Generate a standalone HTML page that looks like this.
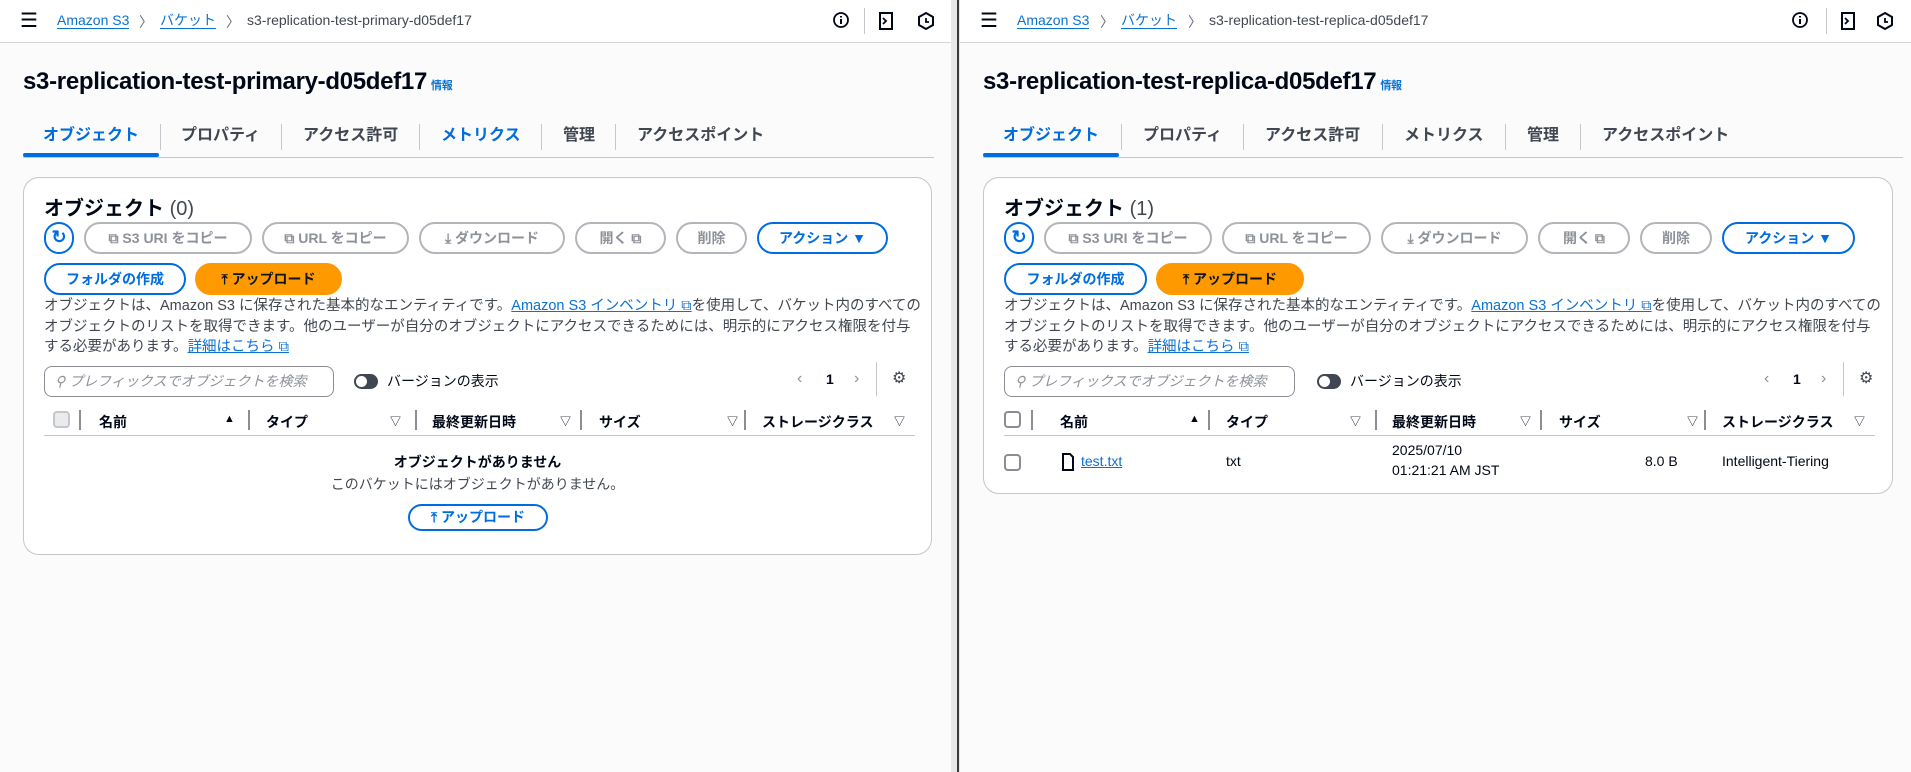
<!DOCTYPE html>
<html><head><meta charset="utf-8"><style>
*{box-sizing:border-box;margin:0;padding:0}
body{width:1911px;height:772px;overflow:hidden;background:#fafafa;font-family:"Liberation Sans","Noto Sans CJK JP",sans-serif;color:#000716;position:relative}
.pane{position:absolute;top:0;height:772px;background:#fbfbfb;overflow:hidden}
.pane *{position:absolute}
.pane span,.pane br{position:static!important}
.top{left:0;right:0;top:0;height:43px;background:#fff;border-bottom:1px solid #d5d5d8}
.bc{top:12px;font-size:14px;white-space:nowrap}
.lnk{color:#0972d3;border-bottom:1px solid #0972d3;line-height:17px}
.sep{color:#5f6b7a}
.t{white-space:nowrap}
.title{top:68px;left:23px;font-size:24px;font-weight:bold;letter-spacing:-0.3px}
.info{font-size:11px;font-weight:bold;color:#0972d3;margin-left:4px}
.tabs{left:23px;top:122px;height:36px;right:0}
.tab{top:0;font-size:16px;font-weight:bold;height:36px;line-height:28px;color:#414750}
.tsep{top:2px;width:1px;height:26px;background:#c6c6cd}
.box{left:23px;top:177px;background:#fff;border:1px solid #c6c6cd;border-radius:16px}
.btn{height:32px;border:2px solid #b4b4bb;border-radius:16px;color:#8d9199;font-size:14px;font-weight:bold;text-align:center;line-height:28px;white-space:nowrap}
.pb{border-color:#006ce0;color:#006ce0}
.up{background:#ff9900;border-color:#ff9900;color:#0f141a}
.desc{left:20px;top:118px;width:880px;font-size:14.5px;line-height:20.5px;color:#414750}
.lk{color:#0972d3;text-decoration:underline}
.hdr{font-size:14px;font-weight:bold;top:234px;white-space:nowrap}
.vd{top:232px;width:2px;height:20px;background:#8c8c94}
.tri{top:235px;font-size:11px}
</style></head><body>

<!-- LEFT PANE -->
<div class="pane" style="left:0;width:956px">
 <div class="top"></div>
 <div class="t" style="left:20px;top:8px;font-size:20px">☰</div>
 <div class="bc" style="left:57px"><span class="lnk">Amazon S3</span></div>
 <div class="bc sep" style="left:139px">〉</div>
 <div class="bc" style="left:160px"><span class="lnk">バケット</span></div>
 <div class="bc sep" style="left:226px">〉</div>
 <div class="bc" style="left:247px;color:#414750">s3-replication-test-primary-d05def17</div>
 <svg style="left:832px;top:11px" width="18" height="18" viewBox="0 0 18 18"><circle cx="9" cy="9" r="7" fill="none" stroke="#000716" stroke-width="1.8"/><path d="M9 8v5M9 5v1.5" stroke="#000716" stroke-width="2"/></svg>
 <div style="left:864px;top:8px;width:1px;height:26px;background:#c6c6cd"></div>
 <svg style="left:878px;top:11px" width="16" height="20" viewBox="0 0 16 20"><rect x="2" y="2" width="12" height="16" fill="none" stroke="#000716" stroke-width="2"/><path d="M5 7l3 3-3 3" fill="none" stroke="#000716" stroke-width="1.8"/></svg>
 <svg style="left:917px;top:11px" width="18" height="20" viewBox="0 0 18 20"><path d="M9 2l7 4v8l-7 4-7-4V6z" fill="none" stroke="#000716" stroke-width="2"/><path d="M9 7v4h3" fill="none" stroke="#000716" stroke-width="1.8"/></svg>

 <div class="title t">s3-replication-test-primary-d05def17<span class="info">情報</span></div>
 <div class="tabs">
  <div class="tab" style="left:20px;color:#006ce0">オブジェクト</div>
  <div style="left:0;top:31px;width:136px;height:4px;background:#006ce0;border-radius:2px"></div>
  <div class="tsep" style="left:137px"></div>
  <div class="tab" style="left:158px">プロパティ</div>
  <div class="tsep" style="left:258px"></div>
  <div class="tab" style="left:280px">アクセス許可</div>
  <div class="tsep" style="left:396px"></div>
  <div class="tab" style="left:418px;color:#006ce0">メトリクス</div>
  <div class="tsep" style="left:518px"></div>
  <div class="tab" style="left:540px">管理</div>
  <div class="tsep" style="left:592px"></div>
  <div class="tab" style="left:614px">アクセスポイント</div>
  <div style="left:0;top:35px;width:911px;height:1px;background:#c6c6cd"></div>
 </div>

 <div class="box" style="width:909px;height:378px">
  <div class="t" style="left:20px;top:14px;font-size:20px;font-weight:bold">オブジェクト <span style="font-weight:normal;color:#414750">(0)</span></div>
  <div class="btn pb" style="left:20px;top:44px;width:30px;font-size:18px;line-height:26px">↻</div>
  <div class="btn" style="left:60px;top:44px;width:168px">⧉ S3 URI をコピー</div>
  <div class="btn" style="left:238px;top:44px;width:147px">⧉ URL をコピー</div>
  <div class="btn" style="left:395px;top:44px;width:146px">⤓ ダウンロード</div>
  <div class="btn" style="left:551px;top:44px;width:91px">開く ⧉</div>
  <div class="btn" style="left:652px;top:44px;width:71px">削除</div>
  <div class="btn pb" style="left:733px;top:44px;width:131px">アクション ▼</div>
  <div class="btn pb" style="left:20px;top:85px;width:142px">フォルダの作成</div>
  <div class="btn up" style="left:171px;top:85px;width:147px">⤒ アップロード</div>
  <div class="desc">オブジェクトは、Amazon S3 に保存された基本的なエンティティです。<span class="lk">Amazon S3 インベントリ ⧉</span>を使用して、バケット内のすべてのオブジェクトのリストを取得できます。他のユーザーが自分のオブジェクトにアクセスできるためには、明示的にアクセス権限を付与する必要があります。<span class="lk">詳細はこちら ⧉</span></div>
  <div style="left:20px;top:188px;width:290px;height:31px;border:1px solid #8c8c94;border-radius:8px"></div>
  <div class="t" style="left:31px;top:193px;font-size:14px;color:#8d9199;font-style:italic">⚲ プレフィックスでオブジェクトを検索</div>
  <div style="left:330px;top:196px;width:24px;height:15px;border-radius:8px;background:#414750"></div>
  <div style="left:332px;top:198px;width:11px;height:11px;border-radius:6px;background:#fff"></div>
  <div class="t" style="left:363px;top:193px;font-size:14px">バージョンの表示</div>
  <div class="t" style="left:773px;top:192px;font-size:16px;color:#8d9199">‹</div>
  <div class="t" style="left:802px;top:193px;font-size:14px;font-weight:bold">1</div>
  <div class="t" style="left:830px;top:192px;font-size:16px;color:#8d9199">›</div>
  <div style="left:852px;top:184px;width:1px;height:34px;background:#c6c6cd"></div>
  <div class="t" style="left:868px;top:190px;font-size:16px;color:#414750">⚙</div>
  <div style="left:29px;top:233px;width:17px;height:17px;border:2px solid #c6c6cd;border-radius:4px;background:#e9ebed"></div>
  <div class="vd" style="left:55px"></div>
  <div class="hdr" style="left:75px">名前</div><div class="tri" style="left:200px">▲</div>
  <div class="vd" style="left:224px"></div>
  <div class="hdr" style="left:242px">タイプ</div><div class="tri" style="left:366px">▽</div>
  <div class="vd" style="left:391px"></div>
  <div class="hdr" style="left:408px">最終更新日時</div><div class="tri" style="left:536px">▽</div>
  <div class="vd" style="left:556px"></div>
  <div class="hdr" style="left:575px">サイズ</div><div class="tri" style="left:703px">▽</div>
  <div class="vd" style="left:720px"></div>
  <div class="hdr" style="left:738px">ストレージクラス</div><div class="tri" style="left:870px">▽</div>
  <div style="left:20px;top:257px;width:871px;height:1px;background:#c6c6cd"></div>
  <div class="t" style="left:0;width:907px;text-align:center;top:274px;font-size:14px;font-weight:bold">オブジェクトがありません</div>
  <div class="t" style="left:0;width:907px;text-align:center;top:296px;font-size:14px;color:#414750">このバケットにはオブジェクトがありません。</div>
  <div class="btn pb" style="left:384px;top:326px;width:140px;height:27px;line-height:23px">⤒ アップロード</div>
 </div>
</div>

<!-- divider -->
<div style="position:absolute;left:951px;top:0;width:9px;height:772px;background:#e8e8e8"></div>
<div style="position:absolute;left:957px;top:0;width:2px;height:772px;background:#3a3a3a"></div>

<!-- RIGHT PANE -->
<div class="pane" style="left:960px;width:951px">
 <div class="top"></div>
 <div class="t" style="left:20px;top:8px;font-size:20px">☰</div>
 <div class="bc" style="left:57px"><span class="lnk">Amazon S3</span></div>
 <div class="bc sep" style="left:140px">〉</div>
 <div class="bc" style="left:161px"><span class="lnk">バケット</span></div>
 <div class="bc sep" style="left:228px">〉</div>
 <div class="bc" style="left:249px;color:#414750">s3-replication-test-replica-d05def17</div>
 <svg style="left:831px;top:11px" width="18" height="18" viewBox="0 0 18 18"><circle cx="9" cy="9" r="7" fill="none" stroke="#000716" stroke-width="1.8"/><path d="M9 8v5M9 5v1.5" stroke="#000716" stroke-width="2"/></svg>
 <div style="left:866px;top:8px;width:1px;height:26px;background:#c6c6cd"></div>
 <svg style="left:880px;top:11px" width="16" height="20" viewBox="0 0 16 20"><rect x="2" y="2" width="12" height="16" fill="none" stroke="#000716" stroke-width="2"/><path d="M5 7l3 3-3 3" fill="none" stroke="#000716" stroke-width="1.8"/></svg>
 <svg style="left:916px;top:11px" width="18" height="20" viewBox="0 0 18 20"><path d="M9 2l7 4v8l-7 4-7-4V6z" fill="none" stroke="#000716" stroke-width="2"/><path d="M9 7v4h3" fill="none" stroke="#000716" stroke-width="1.8"/></svg>

 <div class="title t">s3-replication-test-replica-d05def17<span class="info">情報</span></div>
 <div class="tabs">
  <div class="tab" style="left:20px;color:#006ce0">オブジェクト</div>
  <div style="left:0;top:31px;width:136px;height:4px;background:#006ce0;border-radius:2px"></div>
  <div class="tsep" style="left:138px"></div>
  <div class="tab" style="left:160px">プロパティ</div>
  <div class="tsep" style="left:260px"></div>
  <div class="tab" style="left:282px">アクセス許可</div>
  <div class="tsep" style="left:399px"></div>
  <div class="tab" style="left:421px">メトリクス</div>
  <div class="tsep" style="left:522px"></div>
  <div class="tab" style="left:544px">管理</div>
  <div class="tsep" style="left:597px"></div>
  <div class="tab" style="left:619px">アクセスポイント</div>
  <div style="left:0;top:35px;width:920px;height:1px;background:#c6c6cd"></div>
 </div>

 <div class="box" style="width:910px;height:317px">
  <div class="t" style="left:20px;top:14px;font-size:20px;font-weight:bold">オブジェクト <span style="font-weight:normal;color:#414750">(1)</span></div>
  <div class="btn pb" style="left:20px;top:44px;width:30px;font-size:18px;line-height:26px">↻</div>
  <div class="btn" style="left:60px;top:44px;width:168px">⧉ S3 URI をコピー</div>
  <div class="btn" style="left:238px;top:44px;width:149px">⧉ URL をコピー</div>
  <div class="btn" style="left:397px;top:44px;width:147px">⤓ ダウンロード</div>
  <div class="btn" style="left:554px;top:44px;width:92px">開く ⧉</div>
  <div class="btn" style="left:656px;top:44px;width:72px">削除</div>
  <div class="btn pb" style="left:738px;top:44px;width:133px">アクション ▼</div>
  <div class="btn pb" style="left:20px;top:85px;width:143px">フォルダの作成</div>
  <div class="btn up" style="left:172px;top:85px;width:148px">⤒ アップロード</div>
  <div class="desc">オブジェクトは、Amazon S3 に保存された基本的なエンティティです。<span class="lk">Amazon S3 インベントリ ⧉</span>を使用して、バケット内のすべてのオブジェクトのリストを取得できます。他のユーザーが自分のオブジェクトにアクセスできるためには、明示的にアクセス権限を付与する必要があります。<span class="lk">詳細はこちら ⧉</span></div>
  <div style="left:20px;top:188px;width:291px;height:31px;border:1px solid #8c8c94;border-radius:8px"></div>
  <div class="t" style="left:31px;top:193px;font-size:14px;color:#8d9199;font-style:italic">⚲ プレフィックスでオブジェクトを検索</div>
  <div style="left:333px;top:196px;width:24px;height:15px;border-radius:8px;background:#414750"></div>
  <div style="left:335px;top:198px;width:11px;height:11px;border-radius:6px;background:#fff"></div>
  <div class="t" style="left:366px;top:193px;font-size:14px">バージョンの表示</div>
  <div class="t" style="left:780px;top:192px;font-size:16px;color:#8d9199">‹</div>
  <div class="t" style="left:809px;top:193px;font-size:14px;font-weight:bold">1</div>
  <div class="t" style="left:837px;top:192px;font-size:16px;color:#8d9199">›</div>
  <div style="left:859px;top:184px;width:1px;height:34px;background:#c6c6cd"></div>
  <div class="t" style="left:875px;top:190px;font-size:16px;color:#414750">⚙</div>
  <div style="left:20px;top:233px;width:17px;height:17px;border:2px solid #8c8c94;border-radius:4px;background:#fff"></div>
  <div class="vd" style="left:47px"></div>
  <div class="hdr" style="left:76px">名前</div><div class="tri" style="left:205px">▲</div>
  <div class="vd" style="left:224px"></div>
  <div class="hdr" style="left:242px">タイプ</div><div class="tri" style="left:366px">▽</div>
  <div class="vd" style="left:391px"></div>
  <div class="hdr" style="left:408px">最終更新日時</div><div class="tri" style="left:536px">▽</div>
  <div class="vd" style="left:556px"></div>
  <div class="hdr" style="left:575px">サイズ</div><div class="tri" style="left:703px">▽</div>
  <div class="vd" style="left:720px"></div>
  <div class="hdr" style="left:738px">ストレージクラス</div><div class="tri" style="left:870px">▽</div>
  <div style="left:20px;top:257px;width:871px;height:1px;background:#c6c6cd"></div>
  <div style="left:20px;top:276px;width:17px;height:17px;border:2px solid #8c8c94;border-radius:4px;background:#fff"></div>
  <svg style="left:78px;top:275px" width="12" height="18" viewBox="0 0 12 18"><path d="M1 1h7l3 3v13H1z" fill="none" stroke="#000716" stroke-width="2"/></svg>
  <div class="t" style="left:97px;top:275px;font-size:14px;color:#0972d3;text-decoration:underline">test.txt</div>
  <div class="t" style="left:242px;top:275px;font-size:14px">txt</div>
  <div class="t" style="left:408px;top:262px;font-size:14px;line-height:20px">2025/07/10<br>01:21:21 AM JST</div>
  <div class="t" style="left:661px;top:275px;font-size:14px">8.0 B</div>
  <div class="t" style="left:738px;top:275px;font-size:14px">Intelligent-Tiering</div>
 </div>
</div>
</body></html>
